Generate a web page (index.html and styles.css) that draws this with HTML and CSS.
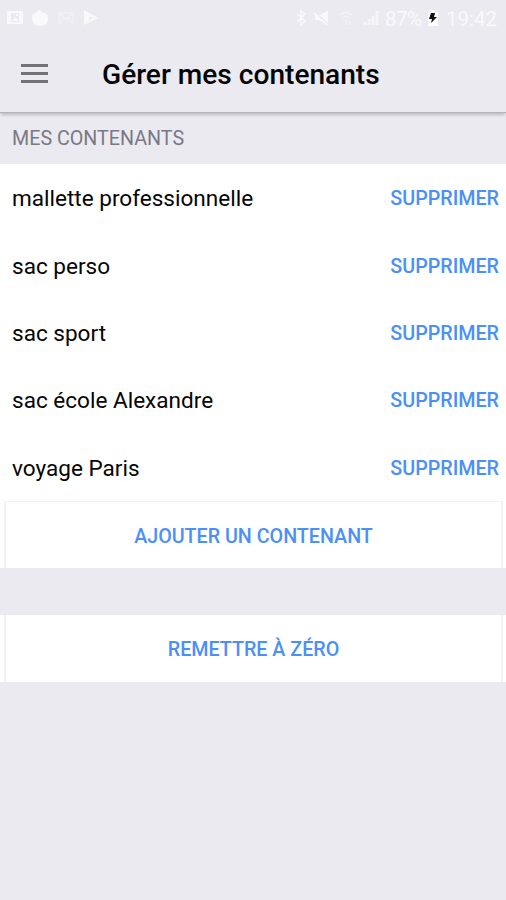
FILE: index.html
```
<!DOCTYPE html>
<html lang="fr">
<head>
  <meta charset="UTF-8">
  <title>Gérer mes contenants</title>
  <link rel="stylesheet" href="styles.css">
</head>
<body>
  <div class="status-bar">
    <div class="status-left">
      <svg width="92" height="18" viewBox="0 0 92 18" fill="currentColor">
        <path fill-rule="evenodd" d="M0 2h16v13H0zM4 4v9h8V4zM5 12l3-4 4 4zM9 5h2v2H9z"/>
        <path d="M25 8q0-4 4-4 3-6 7 0 5 0 5 5 0 8-8 8t-8-9z"/>
        <path d="M52 15V4l7 6 7-6v11M52 4h14M52 15l5-6M66 15l-5-6" fill="none" stroke="currentColor" stroke-width="1.4" opacity=".5"/>
        <path fill-rule="evenodd" d="M77 1l14 8-14 7zM82 8v4l5-4z"/>
      </svg>
    </div>
    <div class="status-right">
      <svg class="signals" width="86" height="18" viewBox="0 0 86 18" fill="none" stroke="currentColor" stroke-width="1.5">
        <path d="M2 5l8 7-4 4V2l4 3-8 8"/>
        <path d="M20 6h4l9-4v14l-9-5h-4z" fill="currentColor" stroke="none"/>
        <path d="M19 2l15 14" stroke="#ebeaf0"/>
        <path d="M19 4l13 12"/>
        <path d="M45 6q6-5 12 0M48 9q3-3 6 0M51 10v6M55 12v4" opacity=".6"/>
        <path d="M70 16v-3M74 16v-6M78 16V7M82 16V2" stroke-width="2.8" opacity=".75"/>
      </svg>
      <span class="percent">87%</span>
      <svg class="battery" width="12" height="18" viewBox="0 0 12 18">
        <path d="M1 3h3V1h4v2h3v14H1z" fill="#fff"/>
        <path d="M4 4h4L7 8h3l-6 6 1-4H2z" fill="#111"/>
      </svg>
      <span class="clock">19:42</span>
    </div>
  </div>
  <header class="toolbar">
    <button class="menu" aria-label="Menu"><span></span><span></span><span></span></button>
    <h1>Gérer mes contenants</h1>
  </header>
  <main>
    <h2 class="list-header">MES CONTENANTS</h2>
    <ul class="list">
      <li><span class="name">mallette professionnelle</span><button class="delete">SUPPRIMER</button></li>
      <li><span class="name">sac perso</span><button class="delete">SUPPRIMER</button></li>
      <li><span class="name">sac sport</span><button class="delete">SUPPRIMER</button></li>
      <li><span class="name">sac école Alexandre</span><button class="delete">SUPPRIMER</button></li>
      <li><span class="name">voyage Paris</span><button class="delete">SUPPRIMER</button></li>
    </ul>
    <div class="action add"><button>AJOUTER UN CONTENANT</button></div>
    <div class="action reset"><button>REMETTRE À ZÉRO</button></div>
  </main>
</body>
</html>
```
FILE: styles.css
```
* {
  box-sizing: border-box;
}
body {
  margin: 0;
  height: 900px;
  overflow: hidden;
  font-family: Roboto, sans-serif;
  background: #ebeaf0;
  color: #050505;
}
button {
  font-family: inherit;
  border: none;
  padding: 0;
  background: none;
  cursor: pointer;
}
.status-bar {
  display: flex;
  justify-content: space-between;
  height: 36px;
  padding: 9px 6px 0 7px;
  color: #f9f9fc;
}
.status-right {
  display: flex;
  font-size: 20.5px;
  line-height: 20px;
}
.percent {
  margin-left: 4px;
  width: 40px;
  letter-spacing: -0.5px;
  white-space: nowrap;
}
.battery {
  margin: 0 7px 0 2px;
}
.clock {
  width: 54px;
  white-space: nowrap;
}
.toolbar {
  display: flex;
  align-items: center;
  height: 77px;
  padding-left: 21px;
  border-bottom: 1px solid #b5b4b9;
  box-shadow: 0 3px 3px -1px rgba(0, 0, 0, 0.2);
}
.menu {
  display: flex;
  flex-direction: column;
  gap: 5px;
  width: 27px;
  margin-bottom: 2px;
}
.menu span {
  height: 3px;
  background: #737377;
}
h1 {
  margin: 1px 0 0 54px;
  font-size: 28.1px;
  font-weight: 500;
}
.list-header {
  margin: 0;
  height: 51px;
  padding-left: 12px;
  line-height: 52px;
  font-size: 19.7px;
  font-weight: 400;
  color: #797986;
}
.list {
  margin: 0;
  padding: 0;
  list-style: none;
  background: #fff;
}
.list li {
  display: flex;
  align-items: center;
  justify-content: space-between;
  height: 67.4px;
  padding: 2px 7px 0 12px;
}
.name {
  font-size: 22.55px;
}
.delete, .action button {
  font-size: 19.7px;
  font-weight: 500;
  color: #4b8ff9;
}
.action {
  padding: 0 3px 0 4px;
  background: #fff;
}
.action button {
  display: block;
  width: 100%;
  height: 67px;
  padding-top: 3px;
  border: 2px solid #f3f3f5;
  border-bottom: none;
}
.add button {
  border-top-width: 1px;
}
.reset {
  margin-top: 47px;
}
.reset button {
  border-top: none;
}
```
